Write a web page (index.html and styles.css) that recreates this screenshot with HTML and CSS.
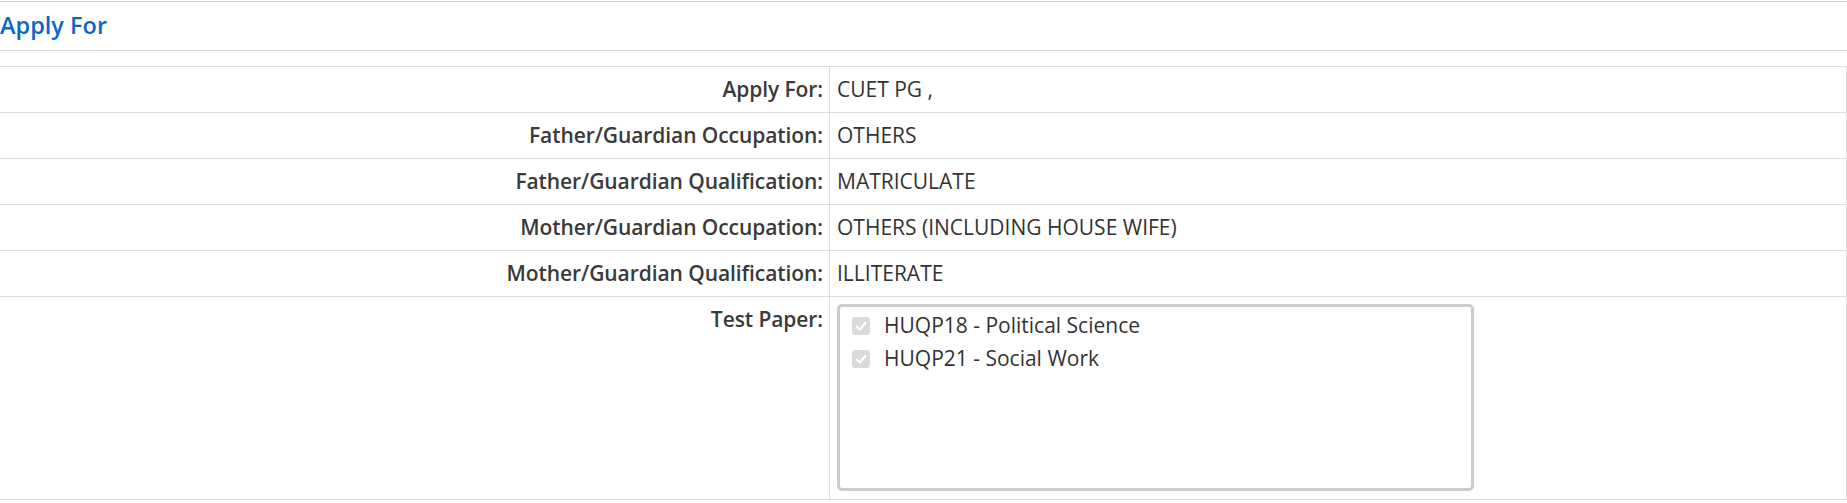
FILE: index.html
```html
<!DOCTYPE html>
<html lang="en">
<head>
<meta charset="utf-8">
<title>Apply For</title>
<link rel="stylesheet" href="styles.css">
</head>
<body>
<div class="panel">
  <div class="panel-heading"><h3 class="panel-title">Apply For</h3></div>
  <div class="panel-body">
    <div class="detail-table">
      <div class="row"><div class="label">Apply For:</div><div class="value">CUET PG ,</div></div>
      <div class="row"><div class="label">Father/Guardian Occupation:</div><div class="value">OTHERS</div></div>
      <div class="row"><div class="label">Father/Guardian Qualification:</div><div class="value">MATRICULATE</div></div>
      <div class="row"><div class="label">Mother/Guardian Occupation:</div><div class="value">OTHERS (INCLUDING HOUSE WIFE)</div></div>
      <div class="row"><div class="label">Mother/Guardian Qualification:</div><div class="value">ILLITERATE</div></div>
      <div class="row"><div class="label">Test Paper:</div>
        <div class="value value-box">
          <div class="paper-box">
            <div class="paper-item">
              <span class="check"><svg viewBox="0 0 18 18" width="18" height="18"><path d="M4.5 9.5 L7.8 12.5 L13.5 5.8" fill="none" stroke="#fff" stroke-width="2.2" stroke-linecap="round" stroke-linejoin="round"/></svg></span>
              <span>HUQP18 - Political Science</span>
            </div>
            <div class="paper-item">
              <span class="check"><svg viewBox="0 0 18 18" width="18" height="18"><path d="M4.5 9.5 L7.8 12.5 L13.5 5.8" fill="none" stroke="#fff" stroke-width="2.2" stroke-linecap="round" stroke-linejoin="round"/></svg></span>
              <span>HUQP21 - Social Work</span>
            </div>
          </div>
        </div>
      </div>
    </div>
  </div>
</div>
</body>
</html>
```

FILE: styles.css
```css
html, body {
  margin: 0;
  padding: 0;
  background: #ffffff;
}
body {
  font-family: "Open Sans", "Liberation Sans", sans-serif;
  color: #333333;
}
.panel {
  width: 1847px;
}
.panel-heading {
  margin-top: 1px;
  border-top: 1px solid #cfcfcf;
  border-bottom: 1px solid #d4d4d4;
  height: 48px;
  display: flex;
  align-items: center;
}
.panel-title {
  margin: 0;
  font-size: 23.5px;
  font-weight: 600;
  color: #0b67c8;
  line-height: 1;
}
.panel-body {
  padding-top: 15px;
}
.detail-table {
  border-top: 1px solid #dddddd;
  border-right: 1px solid #dddddd;
}
.row {
  display: grid;
  grid-template-columns: 830px 1fr;
}
.label {
  border-right: 1px solid #dddddd;
  border-bottom: 1px solid #dddddd;
  text-align: right;
  padding-right: 6px;
  font-size: 21px;
  font-weight: 600;
  letter-spacing: -0.08px;
  line-height: 45px;
  color: #3a3a3a;
}
.value {
  border-bottom: 1px solid #dddddd;
  padding-left: 7px;
  font-size: 21px;
  font-weight: 400;
  line-height: 45px;
}
.value-box {
  padding-top: 7px;
  padding-bottom: 8px;
}
.paper-box {
  box-sizing: border-box;
  width: 637px;
  height: 187px;
  border: 3px solid #cccccc;
  border-radius: 5px;
  padding: 2px 12px;
}
.paper-item {
  display: flex;
  align-items: center;
  gap: 14px;
  line-height: 33px;
  height: 33px;
}
.check {
  width: 18px;
  height: 18px;
  border-radius: 3px;
  background: #dadada;
  display: flex;
  flex: none;
}
```
